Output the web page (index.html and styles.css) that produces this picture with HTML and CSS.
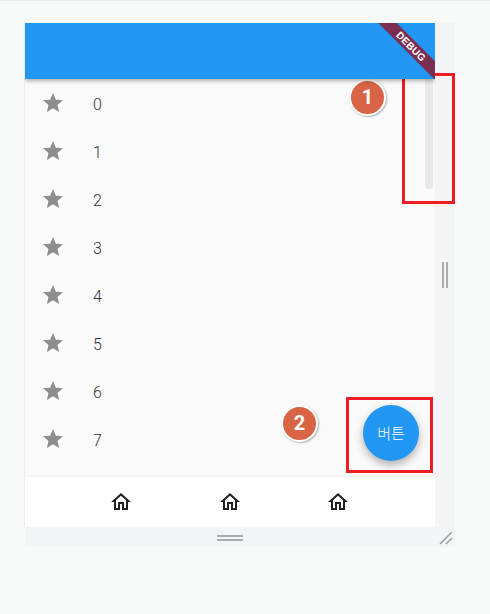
FILE: index.html
```html
<!DOCTYPE html>
<html lang="en">
<head>
    <meta charset="UTF-8">
    <meta name="viewport" content="width=device-width, initial-scale=1.0">
    <title>Scrollbar</title>
    <link rel="stylesheet" href="styles.css">
</head>
<body>
    <svg class="icon-defs" width="0" height="0">
        <symbol id="star" viewBox="0 0 24 24"><path d="M12 17.27 18.18 21l-1.64-7.03L22 9.24l-7.19-.61L12 2 9.19 8.63 2 9.24l5.46 4.73L5.82 21z"/></symbol>
        <symbol id="home" viewBox="0 0 24 24"><path d="M12 5.69l5 4.5V18h-2v-6H9v6H7v-7.81l5-4.5M12 3L2 12h3v8h6v-6h2v6h6v-8h3L12 3z"/></symbol>
    </svg>

    <div class="frame">
        <div class="device">
            <div class="app-bar"></div>
            <div class="debug-banner">DEBUG</div>

            <div class="list">
                <div class="list-item"><svg class="star"><use href="#star"/></svg><span>0</span></div>
                <div class="list-item"><svg class="star"><use href="#star"/></svg><span>1</span></div>
                <div class="list-item"><svg class="star"><use href="#star"/></svg><span>2</span></div>
                <div class="list-item"><svg class="star"><use href="#star"/></svg><span>3</span></div>
                <div class="list-item"><svg class="star"><use href="#star"/></svg><span>4</span></div>
                <div class="list-item"><svg class="star"><use href="#star"/></svg><span>5</span></div>
                <div class="list-item"><svg class="star"><use href="#star"/></svg><span>6</span></div>
                <div class="list-item"><svg class="star"><use href="#star"/></svg><span>7</span></div>
                <div class="scroll-thumb"></div>
                <button class="fab" type="button">버튼</button>
            </div>

            <div class="bottom-nav">
                <svg class="home"><use href="#home"/></svg>
                <svg class="home"><use href="#home"/></svg>
                <svg class="home"><use href="#home"/></svg>
            </div>
        </div>

        <div class="side-handle"><i></i><i></i></div>
        <div class="bottom-handle"><i></i><i></i></div>
        <svg class="corner-handle" width="16" height="14" viewBox="0 0 16 14">
            <path d="M2 13 14 1M8 13l6-6" />
        </svg>
    </div>

    <div class="badge badge-one">1</div>
    <div class="badge badge-two">2</div>
    <div class="mark mark-scrollbar"></div>
    <div class="mark mark-fab"></div>
</body>
</html>
```

FILE: styles.css
```css
html, body {
    margin: 0;
    height: 100%;
}
body {
    position: relative;
    overflow: hidden;
    padding: 22px 0 0 25px;
    box-sizing: border-box;
    border-top: 1px solid #e6e8ec;
    background-color: #f8f9f9;
    font-family: Roboto, "Noto Sans CJK KR", sans-serif;
}
.icon-defs {
    position: absolute;
}
.frame {
    position: relative;
    display: grid;
    grid-template-columns: 410px 20px;
    grid-template-rows: 504px 20px;
    width: 430px;
    background-color: #f3f4f6;
}
.device {
    position: relative;
    display: flex;
    flex-direction: column;
    overflow: hidden;
    background-color: #fafafa;
    box-shadow: -1px 0 0 #ececec;
}
.app-bar {
    position: relative;
    z-index: 2;
    flex: 0 0 56px;
    background-color: #2196f3;
    box-shadow: 0 2px 4px rgba(0, 0, 0, 0.3);
}
.debug-banner {
    position: absolute;
    z-index: 3;
    top: 17px;
    left: 346px;
    width: 80px;
    height: 13px;
    background-color: #7c2d52;
    color: #fff;
    font-family: "Liberation Sans", sans-serif;
    font-size: 10px;
    font-weight: 700;
    line-height: 13px;
    letter-spacing: 0.2px;
    text-align: center;
    transform: rotate(45deg);
}
.list {
    position: relative;
    flex: 1;
    overflow: hidden;
}
.list-item {
    display: flex;
    align-items: center;
    height: 48px;
    padding-left: 16px;
    color: #333;
    font-size: 16px;
    font-weight: 300;
}
.list-item span {
    padding-top: 2px;
}
.star {
    flex: none;
    width: 24px;
    height: 24px;
    margin-right: 28px;
    fill: #8e8e8e;
}
.scroll-thumb {
    position: absolute;
    top: 0;
    right: 2px;
    width: 8px;
    height: 110px;
    border-radius: 0 0 4px 4px;
    background-color: #e8e8e8;
}
.fab {
    position: absolute;
    top: 326px;
    right: 16px;
    width: 56px;
    height: 56px;
    padding: 0 0 2px;
    border: none;
    border-radius: 50%;
    background-color: #2196f3;
    box-shadow: 0 4px 8px rgba(0, 0, 0, 0.3);
    color: #fff;
    font-family: "Noto Sans CJK KR", sans-serif;
    font-size: 15px;
    font-weight: 300;
}
.bottom-nav {
    position: relative;
    display: grid;
    grid-template-columns: repeat(3, 108.5px);
    justify-items: center;
    align-items: center;
    flex: 0 0 50px;
    padding-left: 42px;
    background-color: #fff;
    box-shadow: 0 -1px 2px rgba(0, 0, 0, 0.06);
}
.home {
    width: 24px;
    height: 24px;
    fill: #222;
}
.side-handle {
    display: flex;
    justify-content: center;
    align-items: center;
    gap: 2px;
}
.side-handle i {
    width: 2px;
    height: 26px;
    background-color: #a9abad;
}
.bottom-handle {
    display: flex;
    flex-direction: column;
    justify-content: center;
    align-items: center;
    gap: 2px;
    grid-column: 1 / 3;
    padding: 2px 20px 0 0;
}
.bottom-handle i {
    width: 26px;
    height: 2px;
    background-color: #a9abad;
}
.corner-handle {
    position: absolute;
    right: 1px;
    bottom: 2px;
    fill: none;
    stroke: #9d9fa1;
    stroke-width: 1.5;
}
.badge {
    position: absolute;
    width: 33px;
    height: 33px;
    border: 2px solid #fff;
    border-radius: 50%;
    background-color: #d86445;
    box-shadow: 1px 1px 2px rgba(0, 0, 0, 0.3);
    color: #fff;
    font-family: Roboto, sans-serif;
    font-size: 20px;
    font-weight: 700;
    line-height: 33px;
    text-align: center;
}
.badge-one {
    top: 78px;
    left: 349px;
}
.badge-two {
    top: 404px;
    left: 281px;
}
.mark {
    position: absolute;
    box-sizing: border-box;
    border: 3px solid #ee1c25;
}
.mark-scrollbar {
    top: 72px;
    left: 402px;
    width: 53px;
    height: 131px;
}
.mark-fab {
    top: 396px;
    left: 346px;
    width: 87px;
    height: 76px;
}
```
